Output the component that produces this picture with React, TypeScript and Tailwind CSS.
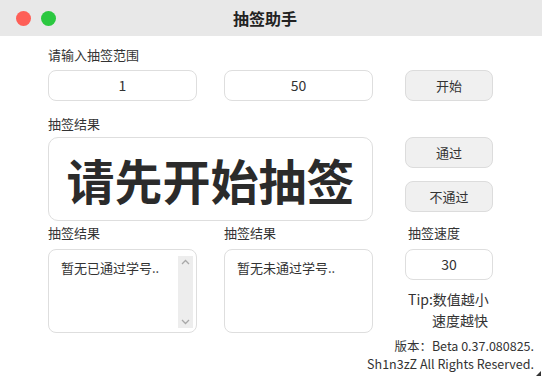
import React from 'react'

const font = { fontFamily: '"Noto Sans CJK SC", "Noto Sans", sans-serif' }

const Field = ({ value }: { value: string }) => (
  <div className="flex h-[31px] items-center justify-center rounded-[8px] border border-[#dedede] bg-white text-[14px] text-[#333]">
    {value}
  </div>
)

const Button = ({ label }: { label: string }) => (
  <div className="flex h-[31px] w-[88px] items-center justify-center rounded-[8px] border border-[#dcdcdc] bg-[#f0f0f0] text-[13px] text-[#333]">
    {label}
  </div>
)

const Label = ({ text }: { text: string }) => (
  <div className="h-[18px] text-[13px] leading-[18px] text-[#333]">{text}</div>
)

const ListBox = ({ text, scroll }: { text: string; scroll?: boolean }) => (
  <div className="relative h-[84px] w-[149px] rounded-[8px] border border-[#dedede] bg-white">
    <div className="pl-[12px] pt-[9px] text-[13px] leading-[18px] text-[#333]">{text}</div>
    {scroll && (
      <div className="absolute right-[3px] top-[6px] flex h-[72px] w-[15px] flex-col items-center justify-between bg-[#ededed] py-[3px]">
        <svg width="9" height="6" viewBox="0 0 9 6">
          <path d="M1 5 L4.5 1.5 L8 5" fill="none" stroke="#a8a8a8" strokeWidth="1.3" />
        </svg>
        <svg width="9" height="6" viewBox="0 0 9 6">
          <path d="M1 1 L4.5 4.5 L8 1" fill="none" stroke="#a8a8a8" strokeWidth="1.3" />
        </svg>
      </div>
    )}
  </div>
)

export default function App() {
  return (
    <div className="relative h-[379px] w-[542px] overflow-hidden bg-white" style={font}>
      <div className="relative flex h-[36px] items-center bg-[#e8e8e8]">
        <div className="ml-[16px] flex gap-[10px]">
          <span className="h-[15px] w-[15px] rounded-full bg-[#fe5f57]" />
          <span className="h-[15px] w-[15px] rounded-full bg-[#2bc840]" />
        </div>
        <div className="absolute inset-0 flex items-center justify-center pr-[12px] text-[16px] font-bold text-[#222]">
          抽签助手
        </div>
      </div>

      <div className="pl-[48px]">
        <div className="mt-[10px]">
          <Label text="请输入抽签范围" />
        </div>
        <div className="mt-[6px] flex">
          <div className="w-[149px]">
            <Field value="1" />
          </div>
          <div className="ml-[27px] w-[149px]">
            <Field value="50" />
          </div>
          <div className="ml-[32px]">
            <Button label="开始" />
          </div>
        </div>

        <div className="flex">
          <div className="w-[325px]">
            <div className="mt-[14px]">
              <Label text="抽签结果" />
            </div>
            <div className="mt-[4px] flex h-[84px] items-center justify-center rounded-[10px] border border-[#dedede] bg-white text-[48px] font-bold leading-none text-[#2b2b2b]">
              请先开始抽签
            </div>
          </div>
          <div className="ml-[32px] mt-[36px] flex flex-col gap-[13px]">
            <Button label="通过" />
            <Button label="不通过" />
          </div>
        </div>

        <div className="mt-[3px] flex">
          <div className="w-[149px]">
            <Label text="抽签结果" />
            <div className="mt-[7px]">
              <ListBox text="暂无已通过学号.." scroll />
            </div>
          </div>
          <div className="ml-[27px] w-[149px]">
            <Label text="抽签结果" />
            <div className="mt-[7px]">
              <ListBox text="暂无未通过学号.." />
            </div>
          </div>
          <div className="ml-[32px] w-[88px]">
            <div className="pl-[3px]">
              <Label text="抽签速度" />
            </div>
            <div className="mt-[7px]">
              <Field value="30" />
            </div>
            <div className="mt-[9px] pl-[3px] text-[14px] leading-[21px] text-[#333]">
              <div>Tip:数值越小</div>
              <div className="pl-[24px]">速度越快</div>
            </div>
          </div>
        </div>
      </div>

      <div className="absolute right-[8px] top-[337px] text-right text-[12.5px] leading-[18px] text-[#333]">
        <div>版本：Beta 0.37.080825.</div>
        <div>Sh1n3zZ All Rights Reserved.</div>
      </div>

      <svg className="absolute bottom-[3px] right-[1px]" width="5" height="5" viewBox="0 0 5 5">
        <path d="M5 0 L5 5 L0 5 Z" fill="#333" />
      </svg>
    </div>
  )
}
